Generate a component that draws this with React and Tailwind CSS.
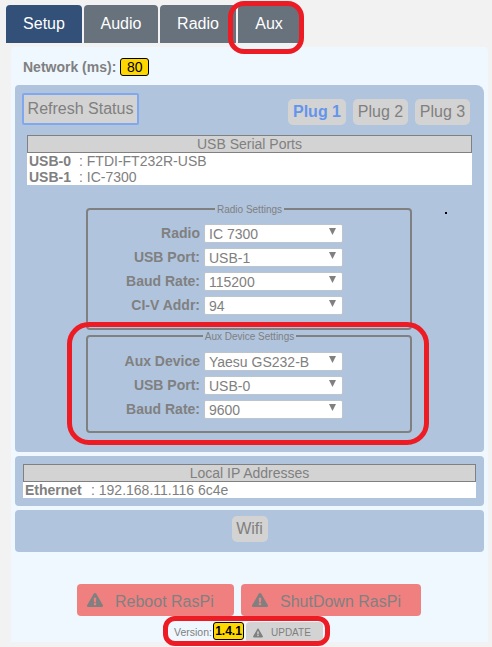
import React from 'react';
import { FaExclamationTriangle } from 'react-icons/fa';

const TABS = [
  { label: 'Setup', width: 'w-[76px]', bg: 'bg-[#335078]' },
  { label: 'Audio', width: 'w-[74px]', bg: 'bg-[#67727c]' },
  { label: 'Radio', width: 'w-[76px]', bg: 'bg-[#67727c]' },
  { label: 'Aux', width: 'w-[62px]', bg: 'bg-[#67727c]' },
];

const RADIO_ROWS = [
  { label: 'Radio', value: 'IC 7300' },
  { label: 'USB Port:', value: 'USB-1' },
  { label: 'Baud Rate:', value: '115200' },
  { label: 'CI-V Addr:', value: '94' },
];

const AUX_ROWS = [
  { label: 'Aux Device', value: 'Yaesu GS232-B' },
  { label: 'USB Port:', value: 'USB-0' },
  { label: 'Baud Rate:', value: '9600' },
];

function SelectRow({ label, value }) {
  return (
    <div className="flex items-center h-[24px]">
      <label className="w-[111px] pt-[4px] text-right text-sm font-bold text-[#808080]">{label}</label>
      <div className="relative ml-[4px] w-[139px] h-[19px]">
        <select
          defaultValue={value}
          className="appearance-none w-full h-full bg-white border border-[#bcc4cc] rounded-[2px] pl-[4px] pt-[1px] text-sm leading-none text-[#808080] outline-none"
        >
          <option value={value}>{value}</option>
        </select>
        <svg className="absolute right-[7px] top-[6px]" width="7" height="7" viewBox="0 0 7 7">
          <path d="M0 0H7L3.5 7Z" fill="#808080" />
        </svg>
      </div>
    </div>
  );
}

function SettingsBox({ title, rows, className }) {
  return (
    <fieldset className={`border-2 border-[#808080] rounded-[4px] w-[326px] ${className}`}>
      <legend className="text-[10px] leading-[10px] text-[#808080] px-[2px] mx-auto translate-y-px">{title}</legend>
      {rows.map((r) => (
        <SelectRow key={r.value} label={r.label} value={r.value} />
      ))}
    </fieldset>
  );
}

function TableHeader({ children }) {
  return (
    <div className="h-[18px] bg-[#d3d3d3] border border-[#808080] text-center text-sm leading-[16px] text-[#808080]">
      {children}
    </div>
  );
}

export default function App() {
  return (
    <div className="relative w-[492px] h-[647px] overflow-hidden bg-[#f2f2f2] font-['Liberation_Sans',Arial,sans-serif]">
      {/* Tabs */}
      <div className="flex gap-[2px] pl-[6px] pt-[5px] h-[43px]">
        {TABS.map((t) => (
          <div
            key={t.label}
            className={`${t.width} ${t.bg} h-[38px] rounded-t-[4px] flex items-center justify-center text-white text-base`}
          >
            {t.label}
          </div>
        ))}
      </div>

      {/* Main panel */}
      <div className="mt-[4px] ml-[11px] w-[477px] h-[595px] bg-[#eff7ff] rounded-t-[4px] px-[4px]">
        <div className="flex items-center h-[38px] pl-[8px] pt-[2px]">
          <span className="text-sm font-bold text-[#808080]">Network (ms):</span>
          <span className="ml-[4px] w-[29px] h-[18px] bg-[#ffd700] border border-black rounded-[3px] text-center text-sm leading-[16px] text-black">80</span>
        </div>

        {/* Status and settings */}
        <div className="w-[469px] h-[367px] bg-[#b0c4de] rounded-[4px] rounded-tr-[8px] px-[7px] pt-[8px]">
          <div className="flex items-start">
            <button className="w-[117px] h-[32px] bg-[#d3d3d3] border-2 border-[#7fa8ee] rounded-[2px] text-base text-[#808080]">
              Refresh Status
            </button>
            <div className="flex gap-[7px] ml-[149px] mt-[6px]">
              <button className="w-[58px] h-[26px] bg-[#d3d3d3] rounded-[5px] text-base font-bold text-[#6495ed]">Plug 1</button>
              <button className="w-[55px] h-[26px] bg-[#d3d3d3] rounded-[5px] text-base text-[#808080]">Plug 2</button>
              <button className="w-[55px] h-[26px] bg-[#d3d3d3] rounded-[5px] text-base text-[#808080]">Plug 3</button>
            </div>
          </div>

          <div className="ml-[5px] mt-[10px] w-[445px]">
            <TableHeader>USB Serial Ports</TableHeader>
            <div className="bg-white h-[32px] pl-[2px] text-sm leading-[16px] text-[#808080]">
              <div className="flex"><b className="w-[50px]">USB-0</b><span>: FTDI-FT232R-USB</span></div>
              <div className="flex"><b className="w-[50px]">USB-1</b><span>: IC-7300</span></div>
            </div>
          </div>

          <SettingsBox title="Radio Settings" rows={RADIO_ROWS} className="ml-[64px] mt-[19px] h-[126px] pt-[5px] pl-[1px]" />
          <SettingsBox title="Aux Device Settings" rows={AUX_ROWS} className="ml-[64px] mt-[1px] h-[102px] pt-[6px] pl-[1px]" />
        </div>

        {/* Local IP */}
        <div className="mt-[4px] w-[469px] h-[50px] bg-[#b0c4de] rounded-[4px] px-[8px] pt-[8px]">
          <TableHeader>Local IP Addresses</TableHeader>
          <div className="bg-white h-[16px] pl-[2px] flex text-sm leading-[16px] text-[#808080]">
            <b className="w-[66px]">Ethernet</b><span>: 192.168.11.116 6c4e</span>
          </div>
        </div>

        {/* Wifi */}
        <div className="mt-[4px] w-[469px] h-[42px] bg-[#b0c4de] rounded-[4px] flex justify-center pt-[6px]">
          <button className="w-[36px] h-[26px] bg-[#d3d3d3] rounded-[5px] text-base text-[#808080]">Wifi</button>
        </div>

        {/* Power buttons */}
        <div className="flex gap-[7px] ml-[62px] mt-[32px]">
          <button className="w-[157px] h-[32px] bg-[#f08080] rounded-[4px] flex items-center pl-[10px] gap-[12px] text-base text-[#808080]">
            <FaExclamationTriangle className="w-[16px] h-[16px]" /><span className="pt-[4px]">Reboot RasPi</span>
          </button>
          <button className="w-[180px] h-[32px] bg-[#f08080] rounded-[4px] flex items-center pl-[11px] gap-[12px] text-base text-[#808080]">
            <FaExclamationTriangle className="w-[16px] h-[16px]" /><span className="pt-[4px]">ShutDown RasPi</span>
          </button>
        </div>

        {/* Version */}
        <div className="flex items-start ml-[159px] mt-[6px] h-[21px]">
          <span className="w-[36px] mt-[3px] text-[10.5px] whitespace-nowrap text-[#808080]">Version:</span>
          <span className="ml-[3px] w-[31px] h-[18px] bg-[#ffd700] border border-black rounded-[3px] text-center text-xs font-bold leading-[16px] text-black">1.4.1</span>
          <button className="ml-[2px] w-[77px] h-[21px] bg-[#d3d3d3] rounded-[4px] flex items-center pl-[7px] gap-[8px] text-[10px] text-[#808080]">
            <FaExclamationTriangle className="w-[10px] h-[10px]" />UPDATE
          </button>
        </div>
      </div>

      {/* Red annotations drawn over the screenshot */}
      <div className="absolute left-[228px] top-[1px] w-[76px] h-[53px] border-[5px] border-[#ed1c24] rounded-[16px]" />
      <div className="absolute left-[67px] top-[322px] w-[362px] h-[123px] border-[5px] border-[#ed1c24] rounded-[22px]" />
      <div className="absolute left-[163px] top-[616px] w-[167px] h-[30px] border-[5px] border-[#ed1c24] rounded-[12px]" />
      <div className="absolute left-[445px] top-[212px] w-[2px] h-[2px] bg-black" />
    </div>
  );
}
